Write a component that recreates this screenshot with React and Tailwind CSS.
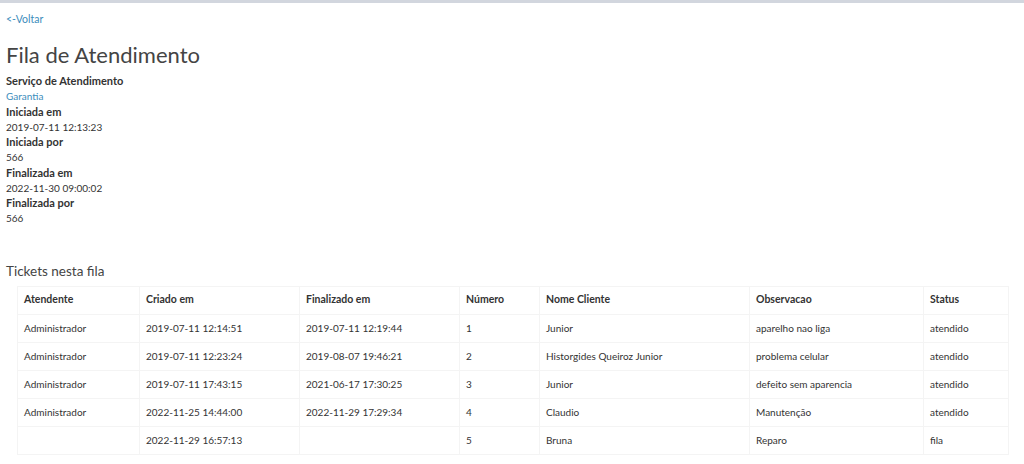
export default function App() {
  const rows = [
    ["Administrador", "2019-07-11 12:14:51", "2019-07-11 12:19:44", "1", "Junior", "aparelho nao liga", "atendido"],
    ["Administrador", "2019-07-11 12:23:24", "2019-08-07 19:46:21", "2", "Historgides Queiroz Junior", "problema celular", "atendido"],
    ["Administrador", "2019-07-11 17:43:15", "2021-06-17 17:30:25", "3", "Junior", "defeito sem aparencia", "atendido"],
    ["Administrador", "2022-11-25 14:44:00", "2022-11-29 17:29:34", "4", "Claudio", "Manutenção", "atendido"],
    ["", "2022-11-29 16:57:13", "", "5", "Bruna", "Reparo", "fila"],
  ];
  const headers = ["Atendente", "Criado em", "Finalizado em", "Número", "Nome Cliente", "Observacao", "Status"];
  const widths = ["w-[122px]", "w-[160px]", "w-[160px]", "w-[80px]", "w-[210px]", "w-[174px]", "w-[85px]"];
  const meta = [
    ["Serviço de Atendimento", "Garantia", true],
    ["Iniciada em", "2019-07-11 12:13:23"],
    ["Iniciada por", "566"],
    ["Finalizada em", "2022-11-30 09:00:02"],
    ["Finalizada por", "566"],
  ];
  return (
    <div className="w-[1024px] h-[464px] bg-white text-[#333] overflow-hidden" style={{ fontFamily: "Lato, 'Liberation Sans', sans-serif" }}>
      <div className="h-[3px] bg-[#d2d6de]" />
      <div className="px-[6px]">
        <div className="pt-[9px] text-[10.5px] leading-[14px] text-[#3c8dbc]">&lt;-Voltar</div>
        <h1 className="mt-[17px] text-[22px] leading-[24px] text-[#444]">Fila de Atendimento</h1>
        <div className="mt-[6px]">
          {meta.map(([l, v, link]) => (
            <div key={l}>
              <div className="text-[11px] leading-[16px] font-bold">{l}</div>
              <div className={"text-[10px] leading-[13.5px] pt-[1px] " + (link ? "text-[#3c8dbc]" : "")}>{v}</div>
            </div>
          ))}
        </div>
        <div className="mt-[36px] text-[13.5px] leading-[18px] text-[#444]">Tickets nesta fila</div>
      </div>
      <div className="pl-[17px] mt-[6px]">
        <table className="border-collapse text-[10.5px] w-[991px] table-fixed">
          <thead>
            <tr className="h-[28px]">
              {headers.map((h, i) => (
                <th key={h} className={"border border-[#f4f4f4] text-left font-bold px-[6px] " + widths[i]}>{h}</th>
              ))}
            </tr>
          </thead>
          <tbody>
            {rows.map((r, ri) => (
              <tr key={ri} className="h-[28px]">
                {r.map((c, ci) => (
                  <td key={ci} className="border border-[#f4f4f4] px-[6px] text-[10px]">{c}</td>
                ))}
              </tr>
            ))}
          </tbody>
        </table>
      </div>
    </div>
  );
}
